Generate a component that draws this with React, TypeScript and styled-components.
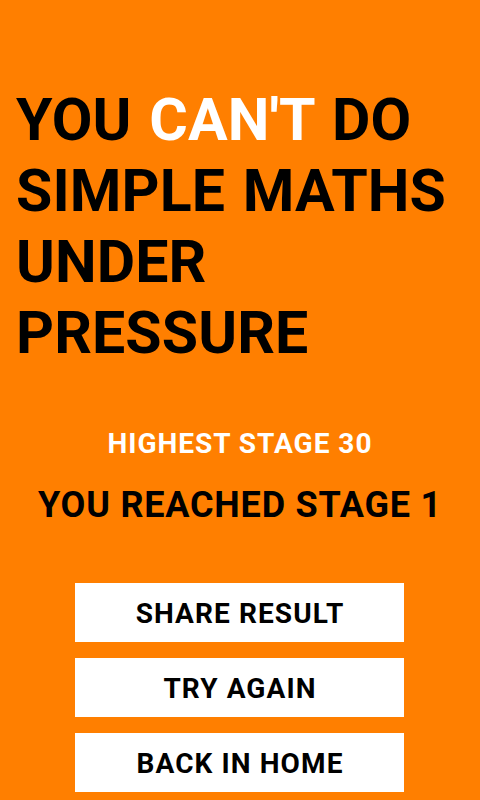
import React from "react";
import styled, { createGlobalStyle } from "styled-components";

const Global = createGlobalStyle`
  html, body { margin: 0; padding: 0; background: #ff7f00; }
  body { font-family: Roboto, "Noto Sans", Arial, sans-serif; }
`;

const Screen = styled.div`
  min-height: 800px;
  background: #ff7f00;
  display: flex;
  flex-direction: column;
  box-sizing: border-box;
  padding-top: 84px;
`;

const Title = styled.h1`
  margin: 0;
  padding: 0 16px;
  font-size: 59px;
  line-height: 71px;
  font-weight: 700;
  letter-spacing: 0.1px;
  word-spacing: 3px;
  color: #000;
  text-transform: uppercase;
`;

const Accent = styled.span`
  color: #fff;
`;

const Stat = styled.div<{ $size: number; $color: string; $mt: number; $ls: number }>`
  margin-top: ${(p) => p.$mt}px;
  text-align: center;
  font-size: ${(p) => p.$size}px;
  font-weight: 700;
  letter-spacing: ${(p) => p.$ls}px;
  color: ${(p) => p.$color};
`;

const Buttons = styled.div`
  margin-top: 57px;
  display: flex;
  flex-direction: column;
  gap: 16px;
  align-items: center;
  padding-right: 1px;
`;

const Button = styled.button`
  width: 329px;
  height: 59px;
  border: none;
  background: #fff;
  color: #000;
  font-family: Roboto, "Noto Sans", Arial, sans-serif;
  font-size: 28px;
  font-weight: 700;
  letter-spacing: 1.1px;
  padding: 2px 0 0 1px;
  cursor: pointer;
`;

export default function App() {
  return (
    <>
      <Global />
      <Screen>
        <Title>
          YOU <Accent>CAN'T</Accent> DO SIMPLE MATHS UNDER PRESSURE
        </Title>
        <Stat $size={28} $color="#fff" $mt={59} $ls={1}>
          HIGHEST STAGE 30
        </Stat>
        <Stat $size={36} $color="#000" $mt={24} $ls={0.8}>
          YOU REACHED STAGE 1
        </Stat>
        <Buttons>
          <Button>SHARE RESULT</Button>
          <Button>TRY AGAIN</Button>
          <Button>BACK IN HOME</Button>
        </Buttons>
      </Screen>
    </>
  );
}
